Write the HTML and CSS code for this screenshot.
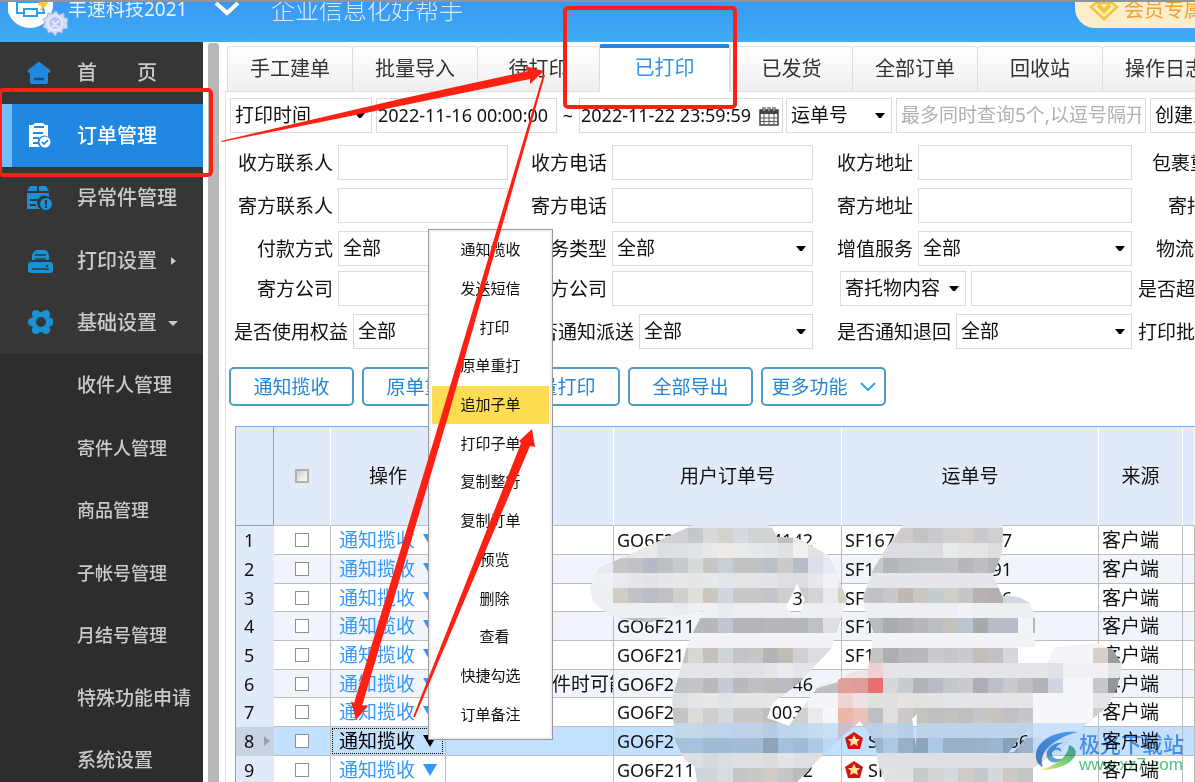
FILE: index.html
```html
<!DOCTYPE html>
<html lang="zh-CN">
<head>
<meta charset="utf-8">
<title>丰速科技2021</title>
<link rel="stylesheet" href="styles.css">
</head>
<body>
<header class="topbar">
  <svg class="logo" width="60" height="41" viewBox="0 0 60 41">
    <circle cx="22" cy="5" r="23" fill="#fff"/>
    <path d="M13 2V-4M15 13H9V2H34L36 13H30" fill="none" stroke="#2b9ff0" stroke-width="2"/>
    <path d="M16 9h13v7H16z" fill="#fff" stroke="#2b9ff0" stroke-width="2"/>
    <path d="M33 0l8 3-4 2 2 0-8 7 3-6-4-1z" fill="#ffc928"/>
    <path d="M48 11l3 4 5-2 0 5 4 0-1 5 1 5-5 1-1 4-4-1-3 4-3-4-4 1-1-4-4-2 2-4-2-4 4-2 1-4 4 1z" fill="#d3dbf8" stroke="#a3b4ea"/>
    <circle cx="47" cy="23" r="7" fill="#b4c4f2" stroke="#e6ecff" stroke-width="2"/>
    <path d="M44 21l3 3 4-3M44 27l3-2 3 2" fill="none" stroke="#e6ecff" stroke-width="2"/>
  </svg>
  <span class="company">丰速科技2021</span>
  <svg class="chevron" width="28" height="18" viewBox="0 0 28 18"><path d="M3 1l11 10L25 1" fill="none" stroke="#fff" stroke-width="4"/></svg>
  <span class="slogan">企业信息化好帮手</span>
  <a class="member" href="#">
    <svg width="30" height="24" viewBox="0 0 30 24"><path d="M7 1h16l5 4-13 12L2 5z" fill="#fff0bd" stroke="#f3c33b" stroke-width="2.5"/><path d="M9 3l6 6 6-6" fill="none" stroke="#f3c33b" stroke-width="4"/></svg>
    <span>会员专属</span>
  </a>
</header>
<div class="body">
  <nav class="sidebar">
    <ul class="menu">
      <li><a href="#"><svg width="26" height="26" viewBox="0 0 26 26"><path d="M10 3q2-2 4 0l9 7q1 3-2 3v9q0 2-2 2H5q-2 0-2-2v-9q-3 0-2-3z" fill="#1f88e2"/><path d="M8 19h8" stroke="#234a72" stroke-width="2.5" stroke-linecap="round"/></svg>首　　页</a></li>
      <li class="active"><a href="#"><svg width="26" height="26" viewBox="0 0 26 26"><path d="M2 2h4q1-2 3-2h6q2 0 3 2h3v12a6 6 0 0 0-8 10H2z" fill="#fff"/><path d="M7 4h10M6 10h10M6 15h6M6 20h5" stroke="#1f88e2" stroke-width="2"/><circle cx="18" cy="19" r="5.5" fill="#fff"/><path d="M15 19l2 2 4-4" fill="none" stroke="#1f88e2" stroke-width="1.7"/></svg>订单管理</a></li>
      <li><a href="#"><svg width="26" height="26" viewBox="0 0 26 26"><path d="M3 1h7v5H0zM12 1h7l3 5H12zM0 8h22v4a7 7 0 0 0-9 12H0z" fill="#1892d4"/><path d="M3 15h8M3 20h6" stroke="#363636" stroke-width="2"/><circle cx="19" cy="19" r="6" fill="#1892d4"/><path d="M19 15v5M19 21v2" stroke="#363636" stroke-width="2"/></svg>异常件管理</a></li>
      <li><a href="#"><svg width="26" height="26" viewBox="0 0 26 26"><path d="M5 12V7q2-5 5-5h7q4 0 5 5v5z" fill="#1892d4"/><path d="M8 7h11M8 11h11" stroke="#363636" stroke-width="1.500"/><rect x="1" y="14" width="25" height="11" rx="3" fill="#1892d4"/><path d="M5 21h17" stroke="#363636" stroke-width="1.500"/><circle cx="20" cy="18" r="1.200" fill="#363636"/></svg>打印设置<i class="caret-right"></i></a></li>
      <li><a href="#"><svg width="26" height="26" viewBox="0 0 26 26"><g fill="#1892d4"><circle cx="14" cy="12" r="10"/><circle cx="5" cy="12" r="4"/><circle cx="23" cy="12" r="4"/><circle cx="9" cy="4" r="4"/><circle cx="19" cy="4" r="4"/><circle cx="9" cy="20" r="4"/><circle cx="19" cy="20" r="4"/></g><circle cx="14" cy="12" r="5" fill="#363636"/></svg>基础设置<i class="caret-down"></i></a></li>
    </ul>
    <ul class="submenu">
      <li><a class="wide" href="#">收件人管理</a></li>
      <li><a href="#">寄件人管理</a></li>
      <li><a href="#">商品管理</a></li>
      <li><a href="#">子帐号管理</a></li>
      <li><a href="#">月结号管理</a></li>
      <li><a class="wide" href="#">特殊功能申请</a></li>
      <li><a class="wide" href="#">系统设置</a></li>
    </ul>
  </nav>
  <div class="scrollbar"></div>
  <main class="main">
    <div class="tabs" role="tablist">
      <button role="tab">手工建单</button><button role="tab">批量导入</button><button role="tab">待打印</button><button role="tab" class="current" aria-selected="true">已打印</button><button role="tab">已发货</button><button role="tab">全部订单</button><button role="tab">回收站</button><button role="tab">操作日志</button>
    </div>
    <section class="panel">
      <div class="query">
        <select class="time-kind" aria-label="时间类型"><option>打印时间</option></select>
        <input class="date" aria-label="开始时间" value="2022-11-16 00:00:00">
        <span class="tilde">~</span>
        <div class="date-end">
          <input class="date" aria-label="结束时间" value="2022-11-22 23:59:59">
          <svg width="20" height="20" viewBox="0 0 20 20"><path d="M1 4h18v15H1z" fill="#fff" stroke="#444" stroke-width="1.500"/><path d="M1 4h18v4H1z" fill="#444"/><path d="M5 8v11M10 8v11M15 8v11M1 12h18M1 15.500h18" stroke="#555"/><path d="M5 1v4M10 1v4M15 1v4" stroke="#444" stroke-width="3"/><path d="M5 1v4M10 1v4M15 1v4" stroke="#ddd"/></svg>
        </div>
        <select class="number-kind" aria-label="单号类型"><option>运单号</option></select>
        <input class="number" aria-label="运单号" placeholder="最多同时查询5个,以逗号隔开">
        <select class="creator" aria-label="创建人"><option>创建人</option></select>
      </div>
      <form class="filters">
        <div class="row">
          <div class="field one"><label for="f1">收方联系人</label><input id="f1"></div>
          <div class="field two"><label for="f2">收方电话</label><input id="f2"></div>
          <div class="field three"><label for="f3">收方地址</label><input id="f3"></div>
          <span class="more indent-m">包裹重量</span>
        </div>
        <div class="row">
          <div class="field one"><label for="f4">寄方联系人</label><input id="f4"></div>
          <div class="field two"><label for="f5">寄方电话</label><input id="f5"></div>
          <div class="field three"><label for="f6">寄方地址</label><input id="f6"></div>
          <span class="more indent-l">寄托物</span>
        </div>
        <div class="row tight">
          <div class="field one"><label for="f7">付款方式</label><select id="f7"><option>全部</option></select></div>
          <div class="field two"><label for="f8">业务类型</label><select id="f8"><option>全部</option></select></div>
          <div class="field three"><label for="f9">增值服务</label><select id="f9"><option>全部</option></select></div>
          <span class="more indent-s">物流状态</span>
        </div>
        <div class="row">
          <div class="field one"><label for="f10">寄方公司</label><input id="f10"></div>
          <div class="field two"><label for="f11">收方公司</label><input id="f11"></div>
          <div class="field three"><select class="content-kind" aria-label="内容类型"><option>寄托物内容</option></select><input aria-label="寄托物内容"></div>
          <span class="more">是否超</span>
        </div>
        <div class="row">
          <div class="field one"><label for="f12">是否使用权益</label><select id="f12"><option>全部</option></select></div>
          <div class="field two"><label for="f13">是否通知派送</label><select id="f13"><option>全部</option></select></div>
          <div class="field three"><label for="f14">是否通知退回</label><select id="f14"><option>全部</option></select></div>
          <span class="more">打印批次</span>
        </div>
      </form>
      <div class="actions">
        <button>通知揽收</button><button>原单重打</button><button>批量打印</button><button>全部导出</button><button>更多功能<svg width="16" height="10" viewBox="0 0 16 10"><path d="M1 1l7 7 7-7" fill="none" stroke="#35a2f0" stroke-width="2"/></svg></button>
      </div>
      <table class="orders">
        <colgroup><col class="c-no"><col class="c-check"><col class="c-op"><col class="c-note"><col class="c-order"><col class="c-way"><col class="c-src"><col></colgroup>
        <thead><tr><th></th><th><input type="checkbox" aria-label="全选"></th><th>操作</th><th></th><th>用户订单号</th><th>运单号</th><th>来源</th><th></th></tr></thead>
        <tbody>
          <tr><td>1</td><td><input type="checkbox" aria-label="选择1"></td><td><button>通知揽收<i></i></button></td><td></td><td><div class="no"><span>GO6F2</span><span>4142</span></div></td><td><div class="no way"><span>SF167</span><span>7</span></div></td><td>客户端</td><td></td></tr>
          <tr><td>2</td><td><input type="checkbox" aria-label="选择2"></td><td><button>通知揽收<i></i></button></td><td></td><td></td><td><div class="no way"><span>SF1</span><span>91</span></div></td><td>客户端</td><td></td></tr>
          <tr><td>3</td><td><input type="checkbox" aria-label="选择3"></td><td><button>通知揽收<i></i></button></td><td></td><td><div class="no"><span></span><span>33</span></div></td><td><div class="no way"><span>SF</span><span>6</span></div></td><td>客户端</td><td></td></tr>
          <tr><td>4</td><td><input type="checkbox" aria-label="选择4"></td><td><button>通知揽收<i></i></button></td><td></td><td>GO6F211</td><td>SF1</td><td>客户端</td><td></td></tr>
          <tr><td>5</td><td><input type="checkbox" aria-label="选择5"></td><td><button>通知揽收<i></i></button></td><td></td><td>GO6F21</td><td>SF1</td><td>客户端</td><td></td></tr>
          <tr><td>6</td><td><input type="checkbox" aria-label="选择6"></td><td><button>通知揽收<i></i></button></td><td class="note">件时可能</td><td><div class="no"><span>GO6F2</span><span>46</span></div></td><td></td><td>客户端</td><td></td></tr>
          <tr><td>7</td><td><input type="checkbox" aria-label="选择7"></td><td><button>通知揽收<i></i></button></td><td></td><td><div class="no"><span>GO6F2</span><span>0032</span></div></td><td></td><td>客户端</td><td></td></tr>
          <tr class="selected"><td>8</td><td><input type="checkbox" aria-label="选择8"></td><td><button>通知揽收<i></i></button></td><td></td><td>GO6F2</td><td><div class="no starred"><svg width="18" height="18" viewBox="0 0 18 18"><path d="M9 0l9 6-3 11H3L0 6z" fill="#cf1712"/><path d="M9 3l2 4 4 0-3 3 1 4-4-2-4 2 1-4-3-3 4 0z" fill="#ffe2a0"/></svg><span>SF</span><span>56</span></div></td><td>客户端</td><td></td></tr>
          <tr><td>9</td><td><input type="checkbox" aria-label="选择9"></td><td><button>通知揽收<i></i></button></td><td></td><td><div class="no"><span>GO6F211</span><span>2</span></div></td><td><div class="no starred"><svg width="18" height="18" viewBox="0 0 18 18"><path d="M9 0l9 6-3 11H3L0 6z" fill="#cf1712"/><path d="M9 3l2 4 4 0-3 3 1 4-4-2-4 2 1-4-3-3 4 0z" fill="#ffe2a0"/></svg><span>SF</span></div></td><td>客户端</td><td></td></tr>
        </tbody>
      </table>
    </section>
  </main>
</div>
<svg class="overlay" width="1195" height="782" viewBox="0 0 1195 782">
  <defs>
    <clipPath id="smudge">
      <path clip-rule="evenodd" d="M613 562L695 524 733 513 752 514 772 528 777 537 797 538 828 555 838 578 847 600 838 627 832 647 823 657 800 682 772 704 767 718 789 726 817 688 838 682V740L825 753 797 782H697L695 767 685 760 675 740 672 700 677 682 688 643 704 611 647 622 613 617 594 603 590 587 600 568ZM797 583L786 607 798 619 805 600Z"/>
      <path clip-rule="evenodd" d="M902 527L908 514 997 513 1003 528 1002 553 993 575 1002 596 1018 597 1030 603 1035 617V647H1018V663H1048L1055 647 1097 643 1113 650 1122 665 1117 688 1107 707 1087 723 1063 747 1033 768V782H885L878 763 875 742 860 721 838 740V680L853 672 868 670 872 647 873 630 865 610 863 597 872 572 885 550ZM917 714L912 719 916 748ZM1008 753L1023 734 1033 730 1014 752Z"/>
    </clipPath>
  </defs>
  <g id="mosaic" clip-path="url(#smudge)" shape-rendering="crispEdges"></g>
</svg>
<div class="context-menu" role="menu">
  <button role="menuitem">通知揽收</button>
  <button role="menuitem">发送短信</button>
  <button role="menuitem" class="short">打印</button>
  <button role="menuitem">原单重打</button>
  <button role="menuitem" class="hover">追加子单</button>
  <button role="menuitem">打印子单</button>
  <button role="menuitem">复制整行</button>
  <button role="menuitem">复制订单</button>
  <button role="menuitem" class="short">预览</button>
  <button role="menuitem" class="short">删除</button>
  <button role="menuitem" class="short">查看</button>
  <button role="menuitem">快捷勾选</button>
  <button role="menuitem">订单备注</button>
</div>
<svg class="overlay" width="1195" height="782" viewBox="0 0 1195 782">
  <g fill="none" stroke="#ff2014" stroke-width="4">
    <rect x="0" y="90" width="211" height="85" rx="3"/>
    <rect x="565" y="8" width="170" height="99" rx="3"/>
  </g>
  <g fill="#ff2014">
    <path d="M221 141L400 99 528 71 525 66 544 71 530 84 530 79 400 106 222 142Z"/>
    <path d="M543 75L440 420 354 703 351 701 356 720 368 706 362 706 447 420 545 75Z"/>
    <path d="M413 717L521 443 519 441 532 429 535 447 530 446 415 717Z"/>
  </g>
</svg>
<div class="watermark">
  <svg width="44" height="42" viewBox="0 0 44 42">
    <defs>
      <linearGradient id="wb" x1="0" y1="1" x2="1" y2="0"><stop offset="0" stop-color="#2f6fc0"/><stop offset="1" stop-color="#48a6ea"/></linearGradient>
      <linearGradient id="wg" x1="0" y1="1" x2="1" y2="0"><stop offset="0" stop-color="#e2e64c"/><stop offset=".6" stop-color="#4dbb68"/><stop offset="1" stop-color="#3eaa82"/></linearGradient>
    </defs>
    <path d="M43 1C24-1 4 7 1 22c-1 8 3 13 7 14C3 25 13 9 43 1Z" fill="url(#wb)"/>
    <path d="M30 12c-12-2-20 6-18 14 2 7 12 7 17 1-5 2-12 1-12-4 0-4 6-6 9-2 1-3-2-5-5-4 1-3 5-5 9-5Z" fill="#3f8fd2"/>
    <path d="M34 14c15 5 5 24-28 25C21 34 33 26 34 14Z" fill="url(#wg)"/>
  </svg>
  <div><strong>极光下载站</strong><em>www.xz7.com</em></div>
</div>
<script src="mosaic.js"></script>
</body>
</html>
```
FILE: styles.css
```css
* { box-sizing: border-box; }
body {
  margin: 0;
  min-height: 100vh;
  display: flex;
  flex-direction: column;
  position: relative;
  overflow: hidden;
  background: #fff;
  color: #111;
  font: 19px/24px "Noto Sans", "Noto Sans CJK SC", sans-serif;
}
button, input, select { font: inherit; color: inherit; margin: 0; }
button { cursor: pointer; padding: 0; }
a { color: inherit; text-decoration: none; }
ul { list-style: none; margin: 0; padding: 0; }

.topbar {
  height: 42px;
  flex: none;
  display: flex;
  align-items: flex-start;
  overflow: hidden;
  padding-left: 8px;
  border-top: 2px solid #8f959b;
  background: linear-gradient(#3a98f2, #3dadf4);
}
.logo { margin-top: -2px; flex: none; }
.company { color: #e4f1ff; font-size: 19px; line-height: 14px; width: 145px; }
.chevron { flex: none; }
.slogan { color: #dcecff; font-size: 24px; font-weight: 300; line-height: 16px; margin-left: 30px; white-space: nowrap; }
.member {
  display: flex;
  gap: 5px;
  height: 26px;
  width: 120px;
  margin-left: auto;
  padding-left: 14px;
  border-radius: 0 0 0 20px;
  background: #fdeecb;
  color: #eea032;
  font-size: 20px;
  line-height: 16px;
  white-space: nowrap;
  overflow: hidden;
}
.member svg { flex: none; }

.body { flex: 1; display: flex; min-height: 0; }
.sidebar { width: 203px; flex: none; background: #2d2d2d; color: #c9c9c9; height: calc(100vh - 42px); overflow: hidden; }
.menu { background: #363636; font-size: 20px; }
.menu a { display: flex; align-items: center; height: 62px; padding-left: 27px; white-space: nowrap; font-weight: 500; }
.menu li:nth-child(even) a { height: 63px; }
.menu svg { margin-right: 24px; flex: none; }
.menu .active { background: #2088e0; border-left: 12px solid #73bdff; color: #fff; }
.menu .active a { padding-left: 15px; }
.caret-right { margin-left: 14px; border: 4px solid transparent; border-left: 5px solid #c9c9c9; border-right: 0; }
.caret-down { margin-left: 11px; border: 5px solid transparent; border-top-color: #c9c9c9; border-bottom: 0; }
.submenu a { display: flex; align-items: center; height: 62px; padding-left: 77px; font-size: 18px; font-weight: 500; white-space: nowrap; }
.submenu li:nth-child(even) a { height: 63px; }
.submenu .wide { font-size: 19px; }
.scrollbar { width: 11px; flex: none; margin: 1px 6px 0 5px; background: #b9b9b9; border-radius: 3px 3px 0 0; }

.main { flex: 1; min-width: 0; overflow: hidden; height: calc(100vh - 42px); }
.tabs { display: flex; align-items: flex-end; height: 50px; padding-left: 2px; border-bottom: 1px solid #dedede; }
.tabs button {
  flex: none;
  width: 125px;
  height: 45px;
  border: 1px solid #dedede;
  border-width: 1px 0 0 1px;
  border-radius: 3px 3px 0 0;
  background: linear-gradient(#fff, #efefef);
  font-size: 20px;
  color: #333;
}
.tabs button:nth-child(3), .tabs button:nth-child(5) { width: 122px; }
.tabs .current { width: 131px; height: 48px; margin-bottom: -1px; background: #fff; color: #2f93e8; border: solid #dedede; border-width: 4px 1px 0 1px; border-top-color: #2088e0; padding-bottom: 4px; }
.panel { border-left: 1px solid #dedede; padding-top: 6px; }

.panel select, .filters input, .query > input, .date-end {
  height: 35px;
  border: 1px solid #dcdcdc;
  border-radius: 0;
  background-color: #fff;
  padding: 0 4px;
  min-width: 0;
  outline: 0;
}
.panel select {
  appearance: none;
  padding: 0 4px 2px;
  background-image: url("data:image/svg+xml,%3Csvg xmlns='http://www.w3.org/2000/svg' width='10' height='6'%3E%3Cpath d='M0 0h10L6 5H4z'/%3E%3C/svg%3E");
  background-repeat: no-repeat;
  background-position: right 6px center;
}
.query { display: flex; align-items: center; padding-left: 4px; }
.query > * { flex: none; }
.query .time-kind { width: 142px; margin-right: 4px; }
.query .date { width: 181px; font-size: 18px; padding: 0 1px 2px; }
.tilde { width: 22px; text-align: center; font-size: 18px; }
.date-end { width: 204px; display: flex; align-items: center; justify-content: space-between; padding: 0 3px 0 0; margin-right: 3px; }
.query .date-end .date { border: 0; width: 176px; height: 30px; outline: 0; background: none; }
.number-kind { width: 106px; margin-right: 4px; }
.query .number { width: 250px; margin-right: 4px; padding: 0 4px 2px; }
.number::placeholder { color: #b0b0b0; opacity: 1; }
.query .creator { width: 120px; }

.filters { padding: 12px 0 0 8px; display: flex; flex-direction: column; gap: 8px; }
.row { display: flex; align-items: center; white-space: nowrap; overflow: hidden; }
.row.tight { margin-bottom: -3px; }
.field { display: flex; align-items: center; gap: 5px; flex: none; }
.field label { text-align: right; }
.field input, .field select { flex: 1; }
.one { width: 274px; }
.one label { min-width: 99px; }
.two { width: 293px; margin-left: 12px; }
.two label { min-width: 87px; }
.three { width: 295px; margin-left: 24px; }
.three label { min-width: 76px; }
.field .content-kind { flex: none; width: 126px; margin-left: 3px; }
.more { margin-left: 6px; flex: none; }
.indent-s { margin-left: 24px; }
.indent-m { margin-left: 20px; }
.indent-l { margin-left: 36px; }

.actions { display: flex; gap: 8px; padding: 18px 0 0 3px; }
.actions button {
  display: flex;
  align-items: center;
  justify-content: center;
  gap: 12px;
  width: 125px;
  height: 39px;
  flex: none;
  border: 2px solid #4d9cc4;
  border-radius: 5px;
  background: #fff;
  color: #1f86dc;
}

.orders { width: calc(100% - 9px); margin: 20px 0 0 9px; table-layout: fixed; border-spacing: 0; border: 1px solid #69b3f2; border-width: 1px 0 0 1px; }
.c-no { width: 38px; }
.c-check { width: 57px; }
.c-op { width: 115px; }
.c-note { width: 168px; }
.c-order { width: 228px; }
.c-way { width: 257px; }
.c-src { width: 84px; }
.orders th { height: 99px; padding: 0; background: #e1eaf9; font-weight: 400; border-right: 1px solid #fff; border-bottom: 1px solid #bdbdbd; }
.orders th:first-child { border-color: #9aa0a8; }
.orders td { height: 29px; padding: 0 3px; line-height: 22px; border-right: 1px solid #bdbdbd; border-bottom: 1px solid #bdbdbd; overflow: hidden; white-space: nowrap; font-size: 18px; }
.orders tbody tr:nth-child(3n) td { height: 28px; }
.orders tbody tr:nth-child(even) td { background: #f1f5fb; }
.orders tbody td:first-child, .orders tbody tr:nth-child(even) td:first-child { background: #e1eaf9; border-color: #e1eaf9; padding-left: 8px; }
.orders td:nth-child(2) { text-align: center; }
.orders td:nth-child(7), .orders td.note { font-size: 19px; }
.orders td.note { padding-left: 106px; text-overflow: clip; }
.orders input { appearance: none; width: 14px; height: 14px; border: 1px solid #8f8f8f; background: #fff; display: block; margin: auto; }
.orders th input { border: 2px solid #b0b0b0; background: linear-gradient(135deg, #ccc, #fff); }
.orders td button { display: flex; align-items: center; gap: 8px; width: 111px; height: 26px; margin-left: -2px; padding: 0 0 0 6px; border: 1px dotted transparent; background: none; color: #3497fa; font-size: 19px; }
.orders td i { border: 7px solid transparent; border-top: 12px solid; border-bottom: 0; }
.orders tbody tr.selected td { background: #c2e0ff; }
.orders tbody tr.selected td:first-child { background: #c9d2e2; border-color: #c9d2e2; }
.orders tbody tr.selected td:first-child::after { content: ""; float: right; margin-top: 6px; border: 5px solid transparent; border-left: 6px solid #98a0ac; border-right: 0; }
.orders .selected button { color: #000; border-color: #000; }
.no { display: flex; justify-content: space-between; width: 196px; }
.no.way { width: 167px; }
.no.starred { width: 184px; justify-content: flex-start; align-items: center; }
.starred svg { margin-right: 5px; }
.starred span:last-child:not(:nth-child(2)) { margin-left: auto; }

.overlay { position: absolute; left: 0; top: 0; pointer-events: none; }
.context-menu {
  position: absolute;
  left: 428px;
  top: 229px;
  width: 125px;
  height: 511px;
  display: grid;
  grid-auto-rows: 1fr;
  padding: 1px 3px 5px;
  border: 1px solid #999;
  background: #fff;
  box-shadow: inset 0 0 0 2px #f0f0f0;
}
.context-menu button { border: 0; background: none; font-size: 15px; line-height: 20px; padding-bottom: 2px; }
.context-menu .short { padding-left: 8px; }
.context-menu .hover { background: #ffdd50; }
.watermark { position: absolute; left: 1035px; top: 731px; display: flex; opacity: .85; mix-blend-mode: multiply; }
.watermark strong { display: block; color: #3f8fe0; font-size: 21px; line-height: 26px; font-weight: 500; white-space: nowrap; }
.watermark em { display: block; color: #35b668; font: 17px/16px "Liberation Sans", sans-serif; }
```
FILE: mosaic.js
```js
// Each entry: top, base colour, then runs of [left, "colours of consecutive 15px cells"].
const SIZE = 15;
const rows = [
  [513, "e2e8f4"],
  [528, "d0d2d4", [688, "c5c8ca d8dbd8 d4d2cc d4dbe2 d0d2d4 d0d2d4 bfc0c3 e8e9eb"], [898, "cfcbca c4c4c4 c8cacb cfd1d1 d6d2cb c8cace cfd0d0"]],
  [543, "e6e8ea", [658, "dcdfe2 dde0e3 e0e3e8 e8e9ea eeeae8 e8ebec e6e9ea e4e7e8 e0e0e0 f0f1f2 e2e2e2 ecedf2"], [883, "dcdde2 dcdde2 dcdde0 dcdce0 e8ebec e4e5e4 e4e5e4 dcdee0"]],
  [558, "c0c2c4", [583, "e6e9ee e6e9ee c8c7c7 c0c2c6 b6bac6 bfc0c2 c6cbcf d6dcdb c6c6c4 c6d0d9 c0c2c4 c0c2c4 bbbfc7 cacaca b8bcc8 dcdfe8 e8eaf0"], [868, "c6cacc b4b5ba b9bcc0 bdc0c1 bdc0c2 c0c2c4 b7b7bb bcbec2 b4b5b8"]],
  [573, "e4e6e9", [583, "eef0f4 eef0f4 e8eaee e4e6ea e2e4e9 e6e7e9 e6e8ea e4e7e8 e7e8e8 e0e6ea e4e5e7 e4e5e7 e2e4e8 dedfe1 dcdde0 e6e8ee f0f2f6"]],
  [588, "c8c8c7", [583, "eeeff2 eeeff2 d0ccc8 c2c2c6 bbbdc4 c2c0c0 cfcfce dfdfda cbc8c2 ced7dd c8c8c7 c8c8c6 c6c6c8 d0cfcb cccccc d4d6d6 e8eaee d2cec8"], [853, "c8c8c8 c0c1c2 c8cac9 bfb8b5 c9c8c5 c4cdd0 d0cdca c6c6c6 b6b2b1 b3b0af d3d7df d3d7df"]],
  [603, "eeeff2", [673, "e8ebf0 edeef0 f0f1f3 e8ebef"], [958, "f2f3f6 eeeff2 edeef0 edeef0"]],
  [618, "b8b8b8", [613, "c8cbcc bcbebf c2c4c4 c4c7c8 c8c8c6 b8b8b8 b8b8b8 bdc8d0 b4b5b5 b4b5b5 b8b8b8 b6b8b8 b4b8bb c0c2c2 dddfe2 dddfe2"], [868, "b8bcc0 a9abad b0b1b3 b6b8b9 babdc2 c4c2bd b9c5cf a8a9aa b8bcc6 b8bcc6 f4f5f8"]],
  [633, "f2f3f6"],
  [648, "c4c4c4", [688, "d9d9d2 c4c1bd cdd5d9 c4c4c4 c8c6c2 b5b4b4 c0bdb8 d0d0d2 dcdde0 dcdde0"], [868, "c5c6c1 adaeae b6b7b7 bababa cacccc c6c7c6 cacbcb c3bfb9 c2c2c2 d5d8d9 f4f5f8 f4f5f8 f4f5f8 f4f5f8 f4f5f8 d8cfcb 9c9e9e 9c9e9e"]],
  [663, "e4e5e8", [733, "e0e1e4 e0e1e4 e4e5e8 eaebed"], [838, "ede2e4 ede2e4 f0d0d4"], [1048, "e0e2e8 f0f1f5 f0f1f5 f0f1f5 e4e5e8 e4e5e8"]],
  [678, "c0c0c0", [673, "bfc3c7 c4c5c6 bbbab8 c4ccd3 b8b9ba c0c0c0 bcbcbd babac0 b2b2b6"], [838, "e3a196 de9c9b e87070 d6d7da c8cbcf b2b4b7 b8bbc5 c4c8ca c8cacb aeadb3 bbbfc8 cacbcb bfc0c0 b2b4b8 d2d7df f5f6fa f5f6fa c8c8c8 929798"]],
  [693, "e4e5e6", [673, "dddfe1 e4e5e6 e8e8e8 e0e4e7"], [808, "f4f5f8 f4f5f8 edd5d3 f0e2e0 dfe1df dfe1de e7e3e1 e2e3e0 e4e4e3"], [1033, "f6f7fa f6f7fa f6f7fa f6f7fa e4e5e6 e4e5e6"]],
  [708, "c8c8c7", [673, "c4c5c6 dbdcd8 cfceca d4dbde c8c8c7 c8c8c7 bfbfbf d3cfca d0d0d0 e8eaed f6f7f9 eeb5aa edc1b9 bebfc0 dee0de cdc9c8 c5c3c0 bebfc0 c4c2bd bebfc0 c5c6c7 c8c4be bfc1c4 c6c7c8 f8f8fa f8f8fa f8f8fa f8f8fa d0cfcb d0cfcb"]],
  [723, "bcd3ea", [673, "c4d8eb c5d8ea c0d4e7 bdd4eb bed2e7 bed2e7 b8cde3 bdd4eb c0d6ed c8dcf0 c9e0f8 cabfcd cfc6d6 bad0e8 c2d4e7 b8cfe8"], [1033, "cbe2fa cbe2fa cbe2fa cbe2fa"]],
  [738, "a4bfda", [673, "a6c0da a6c2de a0bbd6 a0bbd6 a3bdd7 a3bdd7 8fa3b8 a4c0dc 9fbada adc9e5 bbdaf8 a0c0de a0c0de 9bb5d0 abc8e4 9bafc5 8ca5bf aac9e9 9ab1c9 9ab1c9 9bb2ca 9bb6d2 88a0b9 9db3c9"], [1033, "bedcf8 bedcf8 bedcf8"]],
  [753, "dddfe2", [688, "dbdfe2 d7dadd d8dee2 dddfe2 dddfe2 dddcda e3e4e6"]],
  [768, "d1d3d4", [688, "cfd4d9 d3d5d6 d8dde0 c5c6c6 c9c9c8 d0cbc7 c5c6c7 b9bbbd b9bbbd"], [883, "e1e2e3 dfe0df c8cbcb d4d5d5 d6dade d0cdc9 c6c8c9 d5d9dc cdc9c6 c5c6c6"]]
];

const group = document.getElementById("mosaic");

function cell(x, y, width, colour) {
  const rect = document.createElementNS("http://www.w3.org/2000/svg", "rect");
  rect.setAttribute("x", x);
  rect.setAttribute("y", y);
  rect.setAttribute("width", width);
  rect.setAttribute("height", SIZE);
  rect.setAttribute("fill", "#" + colour);
  group.appendChild(rect);
}

for (const [y, base, ...runs] of rows) {
  cell(583, y, 555, base);
  for (const [x, colours] of runs) {
    colours.split(" ").forEach((colour, i) => cell(x + i * SIZE, y, SIZE, colour));
  }
}
```
